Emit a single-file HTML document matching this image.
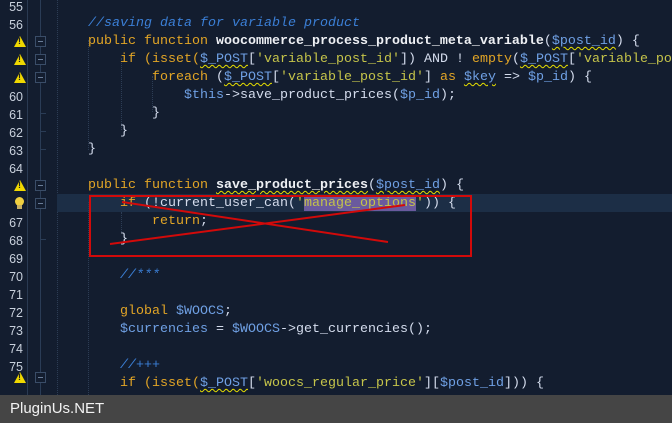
<!DOCTYPE html>
<html><head><meta charset="utf-8"><style>
html,body{margin:0;padding:0;width:672px;height:423px;overflow:hidden;background:#131d2f;}
#ed{position:absolute;left:0;top:0;width:672px;height:395px;background:#131d2f;overflow:hidden;}
.sep{position:absolute;left:27px;top:0;width:1px;height:395px;background:#2a3a52;}
.fold{position:absolute;left:40px;top:0;width:1px;height:395px;background:#2a3c56;}
.dot{position:absolute;top:0;width:0;height:395px;border-left:1px dotted #2d3d55;}
.ln{position:absolute;left:0;width:23px;text-align:right;font:12.5px "Liberation Sans",sans-serif;color:#c8d0dc;height:18px;line-height:18px;margin-top:2px;}
.code{position:absolute;left:56px;height:18px;line-height:18px;font:13.33px "Liberation Mono",monospace;white-space:pre;color:#d4dced;margin-top:2px;}
.k{color:#e2a526}.v{color:#6fa0e4}.s{color:#c5c44a}.c{color:#3b7fd6;font-style:italic}.f{color:#eef0f4;font-weight:bold}
.w{text-decoration:underline wavy #e8e000;text-decoration-thickness:1px;text-underline-offset:2px}
.warn{position:absolute;left:14px;width:0;height:0;border-left:6px solid transparent;border-right:6px solid transparent;border-bottom:11px solid #f0d800;}
.warn:after{content:"!";position:absolute;left:-2px;top:0px;font:bold 9px "Liberation Sans",sans-serif;color:#222;}
.box{position:absolute;left:35px;width:9px;height:9px;border:1px solid #3a4d68;background:#131d2f;}
.box:after{content:"";position:absolute;left:2px;top:4px;width:5px;height:1px;background:#6a7d98;}
.tick{position:absolute;left:40px;width:6px;height:1px;background:#2a3c56;}
#bar{position:absolute;left:0;top:395px;width:672px;height:28px;background:#454545;color:#f2f2f2;font:15px "Liberation Sans",sans-serif;line-height:28px;padding-left:10px;box-sizing:border-box;}
</style></head><body>
<div id="ed">
<div class="sep"></div><div class="fold"></div>
<div class="dot" style="left:57px"></div>
<div style="position:absolute;left:57px;top:194px;width:615px;height:18px;background:#1c2e46"></div>
<div class="dot" style="left:88px;top:40px;height:110px"></div>
<div class="dot" style="left:121px;top:58px;height:72px"></div>
<div class="dot" style="left:152px;top:76px;height:36px"></div>
<div class="dot" style="left:88px;top:202px;height:193px"></div>
<div class="dot" style="left:121px;top:212px;height:20px"></div>
<div style="position:absolute;left:304px;top:195px;width:112px;height:16px;background:#6a5a9e"></div>

<div class="ln" style="top:-4px">55</div>
<div class="ln" style="top:14px">56</div>
<div class="ln" style="top:86px">60</div>
<div class="ln" style="top:104px">61</div>
<div class="ln" style="top:122px">62</div>
<div class="ln" style="top:140px">63</div>
<div class="ln" style="top:158px">64</div>
<div class="ln" style="top:212px">67</div>
<div class="ln" style="top:230px">68</div>
<div class="ln" style="top:248px">69</div>
<div class="ln" style="top:266px">70</div>
<div class="ln" style="top:284px">71</div>
<div class="ln" style="top:302px">72</div>
<div class="ln" style="top:320px">73</div>
<div class="ln" style="top:338px">74</div>
<div class="ln" style="top:356px">75</div>

<div class="warn" style="top:36px"></div><div class="box" style="top:36px"></div>
<div class="warn" style="top:54px"></div><div class="box" style="top:54px"></div>
<div class="warn" style="top:72px"></div><div class="box" style="top:72px"></div>
<div class="tick" style="top:113px"></div><div class="tick" style="top:131px"></div><div class="tick" style="top:149px"></div>
<div class="warn" style="top:180px"></div><div class="box" style="top:180px"></div>
<div style="position:absolute;left:15px;top:197px;width:9px;height:9px;border-radius:50%;background:#f0d040"></div>
<div style="position:absolute;left:17px;top:205px;width:5px;height:4px;background:#c8b060"></div>
<div class="box" style="top:198px"></div>
<div class="tick" style="top:239px"></div>
<div class="warn" style="top:372px"></div><div class="box" style="top:372px"></div>

<div class="code" style="top:14px">    <span class="c">//saving data for variable product</span></div>
<div class="code" style="top:32px">    <span class="k">public function</span> <span class="f">woocommerce_process_product_meta_variable</span>(<span class="v w">$post_id</span>) {</div>
<div class="code" style="top:50px">        <span class="k">if</span> <span class="k">(isset(</span><span class="v w">$_POST</span>[<span class="s">'variable_post_id'</span>]) AND ! <span class="k">empty</span>(<span class="v w">$_POST</span>[<span class="s">'variable_po</span></div>
<div class="code" style="top:68px">            <span class="k">foreach</span> (<span class="v w">$_POST</span>[<span class="s">'variable_post_id'</span>] <span class="k">as</span> <span class="v w">$key</span> => <span class="v">$p_id</span>) {</div>
<div class="code" style="top:86px">                <span class="v">$this</span>->save_product_prices(<span class="v">$p_id</span>);</div>
<div class="code" style="top:104px">            }</div>
<div class="code" style="top:122px">        }</div>
<div class="code" style="top:140px">    }</div>
<div class="code" style="top:176px">    <span class="k">public function</span> <span class="f w">save_product_prices</span>(<span class="v w">$post_id</span>) {</div>
<div class="code" style="top:194px">        <span class="k">if</span> (!current_user_can(<span class="s">'manage_options'</span>)) {</div>
<div class="code" style="top:212px">            <span class="k">return</span>;</div>
<div class="code" style="top:230px">        }</div>
<div class="code" style="top:266px">        <span class="c">//***</span></div>
<div class="code" style="top:302px">        <span class="k">global</span> <span class="v">$WOOCS</span>;</div>
<div class="code" style="top:320px">        <span class="v">$currencies</span> = <span class="v">$WOOCS</span>->get_currencies();</div>
<div class="code" style="top:356px">        <span class="c">//+++</span></div>
<div class="code" style="top:374px">        <span class="k">if</span> <span class="k">(isset(</span><span class="v w">$_POST</span>[<span class="s">'woocs_regular_price'</span>][<span class="v">$post_id</span>])) {</div>

<svg style="position:absolute;left:0;top:0" width="672" height="395">
<rect x="90" y="196" width="381" height="60" fill="none" stroke="#d20a0a" stroke-width="2"/>
<line x1="122" y1="202" x2="388" y2="242" stroke="#d20a0a" stroke-width="2"/>
<line x1="110" y1="244" x2="405" y2="205" stroke="#d20a0a" stroke-width="2"/>
</svg>
</div>
<div id="bar">PluginUs.NET</div>
</body></html>
